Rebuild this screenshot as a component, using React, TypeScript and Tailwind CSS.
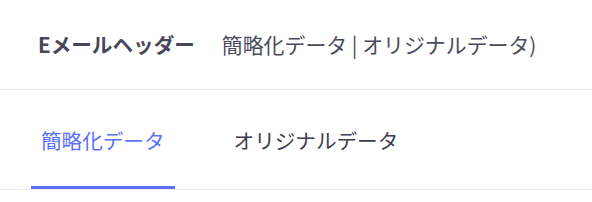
import React from "react";

export default function App() {
  const font = { fontFamily: '"Noto Sans CJK JP", "Noto Sans", sans-serif' };
  return (
    <div className="w-[592px] h-[202px] bg-white" style={font}>
      <div className="h-[90px] flex items-center border-b border-[#ebebef] pl-[38px]">
        <span className="text-[20.6px] font-bold text-[#474759]">Eメールヘッダー</span>
        <span className="ml-[27px] text-[20.9px] text-[#4b4b5c]">簡略化データ | オリジナルデータ)</span>
      </div>
      <div className="h-[100px] flex items-stretch border-b border-[#ebebef] pl-[31px]">
        <div className="flex items-center px-[10px] border-b-[3px] border-[#5b6ff9] text-[#5b6ff9] text-[20.6px] pt-[5px]">
          簡略化データ
        </div>
        <div className="flex items-center px-[10px] ml-[49px] text-[#3d3d4e] text-[20.6px] pt-[5px] border-b-[3px] border-transparent">
          オリジナルデータ
        </div>
      </div>
    </div>
  );
}
